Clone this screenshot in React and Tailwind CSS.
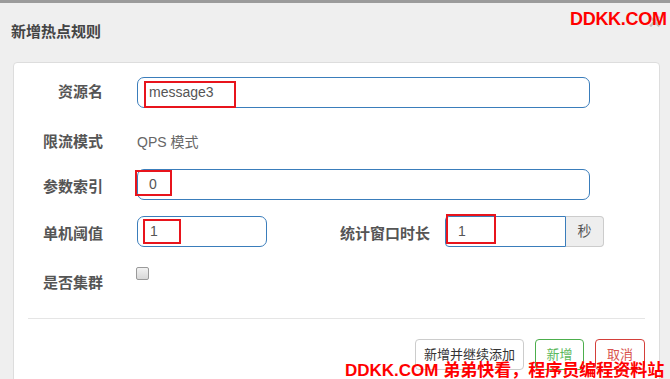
import React from 'react';

const font = "font-['Liberation_Sans','Noto_Sans_CJK_SC',sans-serif]";

// red marker drawn over the screenshot
const Mark = ({ className }) => (
  <div className={`absolute border-2 border-[#e8141c] pointer-events-none ${className}`} />
);

const Label = ({ children, className = '' }) => (
  <div className={`w-[89px] shrink-0 text-right text-[15px] font-bold text-[#555] ${className}`}>{children}</div>
);

const App = () => {
  return (
    <div className={`${font} relative w-[670px] h-[379px] overflow-hidden bg-[#efefef] border-t-[3px] border-[#9b9b9b]`}>
      {/* header */}
      <div className="h-[59px] flex items-center pl-[11px] pb-[1px]">
        <h4 className="text-[15px] font-bold text-[#444]">新增热点规则</h4>
      </div>
      <div className="absolute top-[8px] right-[9px] text-[22px] leading-none font-bold text-black/20">×</div>

      {/* form panel */}
      <div className="ml-[13px] w-[647px] h-[330px] bg-white border border-[#dddddd] rounded-[4px]">
        <div className="pt-[14px] flex flex-col">
          {/* 资源名 */}
          <div className="flex items-center h-[31px]">
            <Label>资源名</Label>
            <div className="relative ml-[34px] w-[453px] h-[31px] border border-[#3a7dbb] rounded-[7px] flex items-center pl-[11px] text-[14px] text-[#555]">
              message3
              <Mark className="left-[6px] top-[3px] w-[92px] h-[27px]" />
            </div>
          </div>

          {/* 限流模式 */}
          <div className="flex items-center h-[31px] mt-[19px]">
            <Label>限流模式</Label>
            <div className="ml-[34px] text-[14px] text-[#666]">QPS 模式</div>
          </div>

          {/* 参数索引 */}
          <div className="flex items-center h-[31px] mt-[11px]">
            <Label className="pt-[6px]">参数索引</Label>
            <div className="relative ml-[34px] w-[453px] h-[31px] border border-[#3a7dbb] rounded-[7px] flex items-center pl-[11px] text-[14px] text-[#555]">
              0
              <Mark className="left-[-3px] top-[0px] w-[37px] h-[26px]" />
            </div>
          </div>

          {/* 单机阈值 / 统计窗口时长 */}
          <div className="flex items-center h-[31px] mt-[16px]">
            <Label className="pt-[6px]">单机阈值</Label>
            <div className="relative ml-[34px] w-[130px] h-[31px] border border-[#3a7dbb] rounded-[7px] flex items-center pl-[12px] text-[14px] text-[#555]">
              1
              <Mark className="left-[5px] top-[2px] w-[38px] h-[25px]" />
            </div>
            <div className="ml-[70px] w-[93px] shrink-0 text-right text-[15px] font-bold text-[#555] pt-[5px] whitespace-nowrap">统计窗口时长</div>
            <div className="relative ml-[15px] flex h-[31px]">
              <div className="w-[121px] h-full border border-[#3a7dbb] rounded-l-[4px] flex items-center pl-[12px] text-[14px] text-[#555]">1</div>
              <div className="w-[38px] h-full bg-[#eeeeee] border border-l-0 border-[#cccccc] rounded-r-[4px] flex items-center justify-center text-[14px] text-[#555]">秒</div>
              <Mark className="left-[1px] top-[-2px] w-[50px] h-[30px]" />
            </div>
          </div>

          {/* 是否集群 */}
          <div className="flex items-start h-[31px] mt-[19px]">
            <Label className="pt-[6px]">是否集群</Label>
            <div className="ml-[33px] mt-[1px] w-[13px] h-[13px] rounded-[2px] border border-[#9a9a9a] bg-gradient-to-b from-[#f2f2f2] to-[#d8d8d8]" />
          </div>
        </div>

        <div className="mx-[14px] mt-[21px] border-t border-[#e5e5e5]" />

        <div className="flex justify-end gap-[11px] mr-[14px] mt-[20px]">
          <button className="w-[109px] h-[31px] rounded-[4px] border border-[#cccccc] bg-white text-[13px] text-[#333]">新增并继续添加</button>
          <button className="w-[49px] h-[31px] rounded-[4px] border border-[#4cae4c] bg-white text-[13px] text-[#5cb85c]">新增</button>
          <button className="w-[50px] h-[31px] rounded-[4px] border border-[#d43f3a] bg-white text-[13px] text-[#d9534f]">取消</button>
        </div>
      </div>

      {/* watermarks */}
      <div className="absolute top-[3px] left-[570px] text-[18px] font-bold text-[#ff0000] tracking-[-0.3px]">DDKK.COM</div>
      <div className="absolute top-[357px] left-[345px] text-[17px] font-bold text-[#ff0000] whitespace-nowrap leading-[22px]">DDKK.COM 弟弟快看，程序员编程资料站</div>
    </div>
  );
};

export default App;
